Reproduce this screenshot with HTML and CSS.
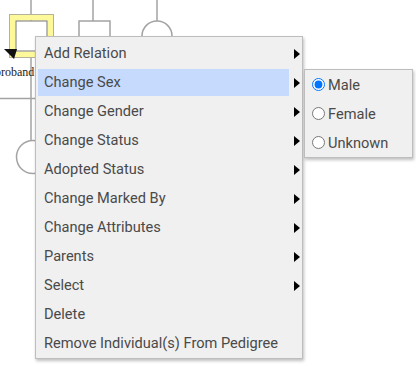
FILE: index.html
```html
<!DOCTYPE html>
<html lang="en">
<head>
  <meta charset="UTF-8">
  <meta name="viewport" content="width=device-width, initial-scale=1.0">
  <title>Pedigree</title>
  <link rel="stylesheet" href="styles.css">
</head>
<body>

  <div class="canvas">
    <!-- pedigree drawing -->
    <svg class="pedigree" width="416" height="366" viewBox="0 0 416 366">
      <g stroke="#a3a3a3" stroke-width="1.5" fill="none">
        <line x1="31" y1="0" x2="31" y2="21"/>
        <line x1="31" y1="57" x2="31" y2="141"/>
        <line x1="0" y1="98.5" x2="40" y2="98.5"/>
        <circle cx="33" cy="157" r="16.5" fill="#fff"/>
        <line x1="93" y1="0" x2="93" y2="21"/>
        <rect x="79" y="21" width="31" height="31" fill="#fff"/>
        <line x1="157" y1="0" x2="157" y2="21"/>
        <circle cx="157" cy="36" r="15" fill="#fff"/>
      </g>
      <!-- proband -->
      <rect x="12.5" y="17.5" width="38" height="37" fill="none" stroke="#fdf899" stroke-width="6"/>
      <rect x="9.5" y="14.5" width="44" height="43" fill="none" stroke="#b5b29a" stroke-width="1"/>
      <rect x="16" y="21" width="31" height="30" fill="#fff" stroke="#777" stroke-width="1"/>
      <polygon points="4,49 17,49 14,59" fill="#111"/>
      <text x="-5" y="76" class="proband">proband</text>
    </svg>

    <!-- context menu -->
    <div class="menu">
      <div class="item"><span class="label">Add Relation</span><span class="arrow"></span></div>
      <div class="item active">
        <span class="label">Change Sex</span><span class="arrow"></span>
        <div class="submenu">
          <label class="opt"><input type="radio" name="sex" checked>Male</label>
          <label class="opt"><input type="radio" name="sex">Female</label>
          <label class="opt"><input type="radio" name="sex">Unknown</label>
        </div>
      </div>
      <div class="item"><span class="label">Change Gender</span><span class="arrow"></span></div>
      <div class="item"><span class="label">Change Status</span><span class="arrow"></span></div>
      <div class="item"><span class="label">Adopted Status</span><span class="arrow"></span></div>
      <div class="item"><span class="label">Change Marked By</span><span class="arrow"></span></div>
      <div class="item"><span class="label">Change Attributes</span><span class="arrow"></span></div>
      <div class="item"><span class="label">Parents</span><span class="arrow"></span></div>
      <div class="item"><span class="label">Select</span><span class="arrow"></span></div>
      <div class="item"><span class="label">Delete</span></div>
      <div class="item"><span class="label">Remove Individual(s) From Pedigree</span></div>
    </div>
  </div>

</body>
</html>
```

FILE: styles.css
```css
body {
  margin: 0;
  background: #fff;
  font-family: Roboto, 'Liberation Sans', sans-serif;
}
.canvas {
  position: relative;
  width: 416px;
  height: 366px;
  overflow: hidden;
}
.pedigree {
  display: block;
}
.proband {
  font-family: 'Liberation Serif', serif;
  font-size: 12px;
  fill: #222;
}

/* context menu */
.menu {
  position: absolute;
  left: 35px;
  top: 36px;
  width: 264px;
  padding: 2px 0 0 2px;
  background: #f0f0f0;
  border: 1px solid #bdbdbd;
  box-shadow: 1px 2px 3px rgba(0,0,0,0.25);
}
.item {
  position: relative;
  display: flex;
  height: 27px;
  margin-top: 1px;
  margin-bottom: 1px;
  padding-bottom: 0;
  color: #4a4a4a;
  font-size: 14.6px;
}
.item + .item {
  margin-top: 2px;
}
.label {
  flex: 1;
  padding-left: 6px;
  line-height: 27px;
  white-space: nowrap;
}
.item.active .label {
  background: #c5dafc;
}
.arrow {
  width: 13px;
  display: flex;
  align-items: center;
  justify-content: center;
}
.arrow::before {
  content: '';
  border-left: 6px solid #000;
  border-top: 5px solid transparent;
  border-bottom: 5px solid transparent;
  margin-left: 2px;
}

/* sub menu */
.submenu {
  position: absolute;
  left: calc(100% + 2px);
  top: 0;
  width: 107px;
  background: #f0f0f0;
  border: 1px solid #bdbdbd;
  box-shadow: 1px 2px 3px rgba(0,0,0,0.25);
}
.opt {
  display: flex;
  align-items: center;
  height: 29px;
  padding-left: 2px;
  color: #4a4a4a;
  font-size: 14.6px;
}
.opt input {
  width: 13px;
  height: 13px;
  margin: 0 3px 0 5px;
}
```
